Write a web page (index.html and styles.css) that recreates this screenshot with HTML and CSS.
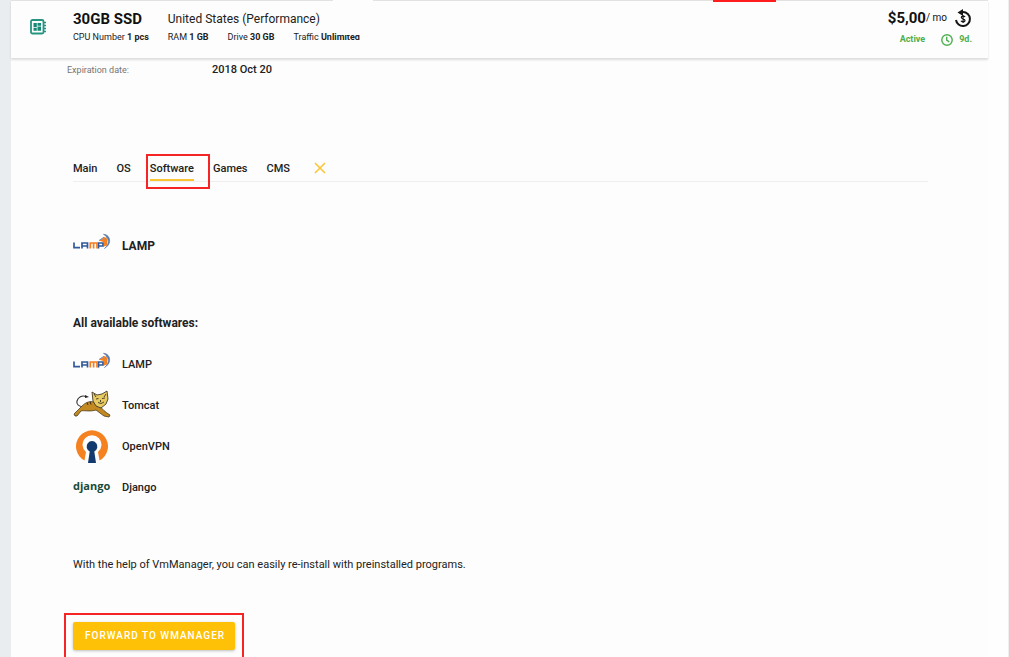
FILE: index.html
```html
<!DOCTYPE html>
<html lang="en">
<head>
<meta charset="utf-8">
<title>30GB SSD</title>
<link rel="stylesheet" href="styles.css">
</head>
<body>
<svg class="defs" aria-hidden="true">
  <symbol id="lamp" viewBox="0 0 38 18">
    <g fill="none" stroke="#315a9c" stroke-width="1.7">
      <path d="M1 9.500V14.700H7M9 15.500V10H14.500V15.500M9 13H14.500M25.500 15.500V10H30V13H25.500"/>
      <path d="M17.300 15.500V10H24V15.500M20.600 10V15.500" stroke="#f57c1f"/>
    </g>
    <path d="M26 7.500 31.500 4 34.500 6 34 12.500 31 13.500 31 9.200Z" fill="#f58220"/>
    <path d="M26 7.500 31 4.200M32 6.500 34 3.500" fill="none" stroke="#7792bd"/>
    <path d="M30.500 1.300C36 1.500 38.500 7.500 35 12.500L31.500 15.500C37 11 36.500 4.500 30.500 1.300Z" fill="#52739f" stroke="#6682ae" stroke-width=".8"/>
  </symbol>
</svg>
<div class="page">
  <main class="panel">
    <header class="header">
      <svg class="chip" viewBox="0 0 17 16" aria-hidden="true">
        <rect x="1" y="1" width="12.500" height="13.500" rx="1.500" fill="none" stroke="#259580" stroke-width="1.800"/>
        <path d="M3.500 4H6.800V8H3.500ZM7.500 4H11V6.800H7.500ZM3.500 8.700H6.800V11.800H3.500ZM7.500 7.500H11V11.800H7.500Z" fill="#168a74"/>
        <path d="M13 3.500H16M13 6.500H16M13 9.500H16M13 12.500H16" stroke="#259580" stroke-width="1.600"/>
      </svg>
      <div class="plan">
        <h1 class="plan-name">30GB SSD</h1>
        <span class="region">United States (Performance)</span>
        <span class="spec">CPU Number <b>1 pcs</b></span>
        <div class="specs">
          <span class="spec">RAM <b>1 GB</b></span>
          <span class="spec">Drive <b>30 GB</b></span>
          <span class="spec erased">Traffic <b>Unlimited</b></span>
        </div>
      </div>
      <div class="billing">
        <div class="price"><b>$5,00</b><span class="period">/ mo</span>
          <svg class="renew" viewBox="0 0 18 19" aria-hidden="true">
            <path d="M6 3H9A7 7 0 1 1 2 11" fill="none" stroke="#151515" stroke-width="2"/>
            <path d="M3.500 3.500 9 0V7Z" fill="#151515"/>
            <path d="M11 8C10.500 6.800 7.300 6.700 7.300 8.500 7.300 10.200 11 9.500 11 11.500 11 13.300 7.600 13.300 7 11.800M9.100 6V14" fill="none" stroke="#151515" stroke-width="1.200"/>
          </svg>
        </div>
        <div class="status"><span>Active</span>
          <svg class="clock" viewBox="0 0 12 12" aria-hidden="true"><g fill="none" stroke="#4caf50" stroke-width="1.400"><circle cx="6" cy="6" r="5.200"/><path d="M5.700 2.800V6.200L8.200 7.800"/></g></svg>
          <span>9d.</span>
        </div>
      </div>
      <span class="mark"></span>
      <span class="patch"></span>
    </header>
    <dl class="expiry"><dt>Expiration date:</dt><dd>2018 Oct 20</dd></dl>
    <section class="content">
      <nav class="tabs">
        <a class="tab" href="#main">Main</a>
        <a class="tab" href="#os">OS</a>
        <a class="tab active" href="#software">Software</a>
        <a class="tab" href="#games">Games</a>
        <a class="tab" href="#cms">CMS</a>
        <button class="close" type="button" aria-label="Close"><svg viewBox="0 0 12 12"><path d="M1 1 11 11M11 1 1 11" stroke="#fbc531" stroke-width="1.500"/></svg></button>
      </nav>
      <div class="software current"><svg class="logo lamp"><use href="#lamp"/></svg><h2>LAMP</h2></div>
      <h3 class="list-title">All available softwares:</h3>
      <ul class="list">
        <li class="software"><svg class="logo lamp"><use href="#lamp"/></svg>LAMP</li>
        <li class="software">
          <svg class="logo tomcat" viewBox="0 0 38 28" aria-hidden="true">
            <path d="M15 17C8 18 3 15 4 11 5 7 9 5 13 6.500" fill="none" stroke="#333" stroke-width="1.100"/>
            <path d="M12 5 16 7 12 8Z" fill="#222"/>
            <path d="M2 26 1 24 9 16C13 12 17 11 21 12L27 16C29 19 32 22 37 25L36 27 31 26 23 20C17 22 10 20 8 21L4 26Z" fill="#c48a22" stroke="#4a3b1e" stroke-width=".8"/>
            <path d="M14 12.500 15 15M17 11.500 18 14.500" stroke="#362a18"/>
            <path d="M19 2 24 5 29 4 34 1 35 9 33 14 28 18 23 16 20 11Z" fill="#e8ca62" stroke="#443b29" stroke-width=".9"/>
            <path d="M21 4 23 7M33 4 31 7M23 9 25.500 8.500M29 8.500 32 8M25 12.500 28 13.500 31 12M27.500 10V12" fill="none" stroke="#3e3520" stroke-width=".9"/>
          </svg>Tomcat</li>
        <li class="software">
          <svg class="logo vpn" viewBox="0 0 38 34" aria-hidden="true">
            <path d="M11.500 30.500A16 16 0 1 1 26.500 30.500L25 22A9.500 9.500 0 1 0 13 22Z" fill="#f58220"/>
            <path d="M16.700 21.400A5.400 5.400 0 1 1 21.300 21.400L23 33H15Z" fill="#123a6d"/>
          </svg>OpenVPN</li>
        <li class="software"><span class="logo django">django</span>Django</li>
      </ul>
      <p class="note">With the help of VmManager, you can easily re-install with preinstalled programs.</p>
      <div class="action"><button class="forward" type="button">FORWARD TO WMANAGER</button></div>
    </section>
  </main>
</div>
</body>
</html>
```
FILE: styles.css
```css
* { box-sizing: border-box; }
body {
  margin: 0;
  background: #fefefe;
  color: #212121;
  font: 500 11px/16px Roboto, sans-serif;
  overflow: hidden;
}
h1, h2, h3, p, ul, dl, dd { margin: 0; padding: 0; }
svg { display: block; }
.defs { position: absolute; width: 0; height: 0; }
.page {
  min-height: 100vh;
  padding-right: 20px;
  border-left: 11px solid #e9edf0;
  border-right: 1px solid #eeeeee;
}
.panel { background: #fdfdfd; min-height: 100vh; }
.header {
  position: relative;
  display: flex;
  align-items: flex-start;
  padding: 9px 16px 12px 19px;
  border-top: 1px solid #e2e2e2;
  box-shadow: 0 2px 2px rgba(0, 0, 0, .13);
}
.chip { width: 17px; height: 16px; margin: 9px 26px 0 0; }
.plan {
  display: grid;
  grid-template-columns: auto auto;
  column-gap: 19px;
  row-gap: 3px;
  justify-content: start;
  flex: 1;
}
.plan-name { font: 700 15px/18px Roboto, sans-serif; color: #111; }
.region { font-size: 12px; line-height: 18px; font-weight: 400; }
.spec { font-size: 9px; line-height: 12px; font-weight: 400; white-space: nowrap; }
.specs { display: flex; gap: 19px; }
.erased { position: relative; }
.erased::after {
  content: "";
  position: absolute;
  right: 0;
  top: 0;
  width: 16px;
  height: 4px;
  background: #fdfdfd;
}
.mark {
  position: absolute;
  top: -1px;
  right: 212px;
  width: 63px;
  height: 2px;
  background: #ff1d1d;
}
.patch {
  position: absolute;
  top: -1px;
  left: 322px;
  width: 40px;
  height: 2px;
  background: #fdfdfd;
}
.price { display: flex; align-items: center; justify-content: flex-end; height: 16px; color: #111; font-size: 15px; }
.period { font-size: 10px; font-weight: 400; white-space: pre; }
.renew { width: 18px; height: 19px; margin-left: 7px; }
.status {
  display: flex;
  align-items: center;
  justify-content: flex-end;
  margin-top: 7px;
  color: #4caf50;
  font-size: 9px;
  line-height: 13px;
  font-weight: 700;
}
.clock { width: 12px; height: 12px; margin: 0 6px 0 16px; }
.expiry { display: flex; margin-top: 4px; padding-left: 56px; }
.expiry dt { width: 145px; color: #757575; font-size: 9px; font-weight: 400; }
.content { padding: 79px 60px 7px 62px; }
.tabs { display: flex; gap: 19px; border-bottom: 1px solid #eeeeee; }
.tab {
  position: relative;
  padding: 4px 0;
  color: inherit;
  text-decoration: none;
}
.active { box-shadow: inset 0 -2px #fbc531; }
.active::after {
  content: "";
  position: absolute;
  inset: -3px -16px -8px -4px;
  border: 2px solid #f52525;
}
.close { width: 12px; height: 12px; margin: 5px 0 0 5px; padding: 0; border: 0; background: none; }
.software { display: flex; align-items: center; height: 41px; }
.logo { width: 38px; height: 28px; margin-right: 11px; flex: none; }
.lamp { height: 18px; margin-bottom: 7px; }
.tomcat { margin-bottom: 3px; }
.vpn { height: 34px; }
.django { height: 20px; color: #174b38; font: 700 11px/16px "Open Sans", sans-serif; }
.current { margin-top: 43px; }
.current h2 { font-size: 12px; font-weight: 700; }
.list-title { margin-top: 49px; font-size: 12px; font-weight: 700; }
.list { margin-top: 13px; list-style: none; }
.note { margin-top: 49px; font-weight: 400; }
.action { position: relative; display: inline-block; margin-top: 49px; }
.action::after {
  content: "";
  position: absolute;
  inset: -9px;
  border: 2px solid #f52525;
  pointer-events: none;
}
.forward {
  display: block;
  padding: 0 10px 0 12px;
  border: 0;
  border-radius: 2px;
  background: #ffc107;
  color: #fff;
  font: 500 10px/28px Roboto, sans-serif;
  letter-spacing: 1px;
  box-shadow: 0 1px 3px rgba(0, 0, 0, .25);
}
```
